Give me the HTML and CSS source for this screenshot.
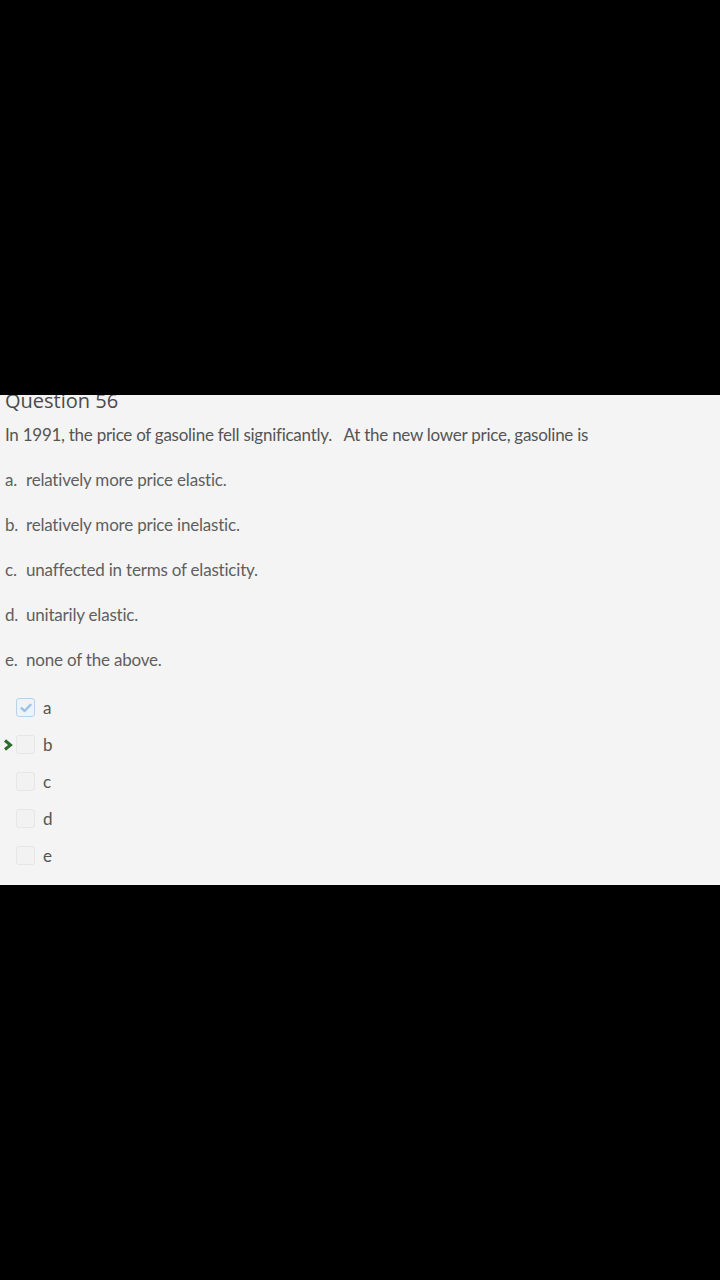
FILE: index.html
```html
<!DOCTYPE html>
<html>
<head>
<meta charset="utf-8">
<link rel="stylesheet" href="styles.css">
</head>
<body>
<div class="panel">
  <div class="heading">Question 56</div>
  <div class="question">In 1991, the price of gasoline fell significantly.&nbsp;&nbsp; At the new lower price, gasoline is</div>
  <div class="options">
    <div class="opt"><span class="letter">a.</span>relatively more price elastic.</div>
    <div class="opt"><span class="letter">b.</span>relatively more price inelastic.</div>
    <div class="opt"><span class="letter">c.</span>unaffected in terms of elasticity.</div>
    <div class="opt"><span class="letter">d.</span>unitarily elastic.</div>
    <div class="opt"><span class="letter">e.</span>none of the above.</div>
  </div>
  <div class="answers">
    <div class="ans">
      <span class="marker"></span>
      <span class="box checked"><svg width="12" height="10" viewBox="0 0 12 10"><path d="M1.5 5.2 L4.6 8 L10.5 1.8" fill="none" stroke="#9cc2e6" stroke-width="2.4" stroke-linecap="round" stroke-linejoin="round"/></svg></span>
      <span class="lbl">a</span>
    </div>
    <div class="ans">
      <span class="marker"><svg width="10" height="12" viewBox="0 0 10 12"><path d="M2 1.5 L7.5 6 L2 10.5" fill="none" stroke="#2f6a2c" stroke-width="3"/></svg></span>
      <span class="box"></span>
      <span class="lbl">b</span>
    </div>
    <div class="ans">
      <span class="marker"></span>
      <span class="box"></span>
      <span class="lbl">c</span>
    </div>
    <div class="ans">
      <span class="marker"></span>
      <span class="box"></span>
      <span class="lbl">d</span>
    </div>
    <div class="ans">
      <span class="marker"></span>
      <span class="box"></span>
      <span class="lbl">e</span>
    </div>
  </div>
</div>
</body>
</html>
```
FILE: styles.css
```css
html, body {
  margin: 0;
  padding: 0;
  background: #000;
  width: 720px;
  height: 1280px;
}
.panel {
  margin-top: 395px;
  height: 490px;
  background: #f4f4f4;
  overflow: hidden;
  padding-left: 5px;
  box-sizing: border-box;
}
.heading {
  font-family: "Open Sans", sans-serif;
  font-size: 20px;
  line-height: 20px;
  margin-top: -4px;
  color: #4a4a4a;
}
.question {
  font-family: Lato, sans-serif;
  font-size: 17px;
  line-height: 20px;
  letter-spacing: -0.26px;
  color: #555;
  margin-top: 14px;
  white-space: nowrap;
}
.options {
  margin-top: 12px;
}
.opt {
  font-family: Lato, sans-serif;
  font-size: 17px;
  line-height: 45px;
  height: 45px;
  letter-spacing: -0.2px;
  color: #5f5f5f;
}
.letter {
  display: inline-block;
  width: 21px;
}
.answers {
  margin-top: 7px;
}
.ans {
  display: flex;
  align-items: center;
  height: 37px;
}
.marker {
  width: 13px;
  display: flex;
  align-items: center;
  justify-content: flex-start;
  margin-left: -2px;
}
.box {
  width: 17px;
  height: 17px;
  border: 1px solid #e6e6e6;
  border-radius: 3px;
  background: #f2f2f2;
  display: flex;
  align-items: center;
  justify-content: center;
}
.box.checked {
  border-color: #b7d2ec;
  background: #eef3f8;
}
.lbl {
  font-family: Lato, sans-serif;
  font-size: 17px;
  color: #555;
  margin-left: 8px;
}
```
